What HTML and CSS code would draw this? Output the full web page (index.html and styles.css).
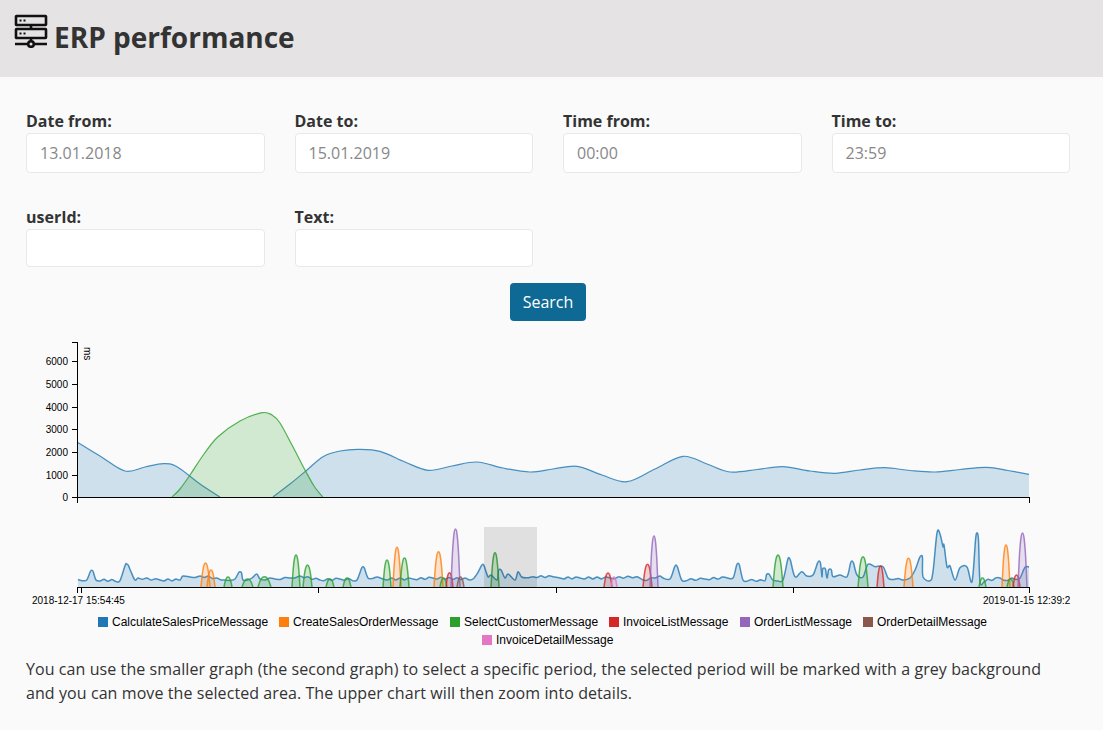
FILE: index.html
```html
<!DOCTYPE html>
<html lang="en">
<head>
    <title>ERP performance</title>
    <link rel="stylesheet" href="styles.css">
</head>
<body>
    <header class="banner">
        <svg class="logo" viewBox="0 0 34 34" width="34" height="34" aria-hidden="true">
            <rect x="2" y="2" width="30" height="9" rx="0.5" />
            <rect x="2" y="15" width="30" height="9" rx="0.5" />
            <path d="M17 11v4M17 24v3M1 30h12M21 30h12" />
            <circle cx="17" cy="30" r="2.8" />
            <path class="logo-dots" d="M5.500 6.500h2M9.500 6.500h2M5.500 19.500h2M9.500 19.500h2" />
        </svg>
        <h1>ERP performance</h1>
    </header>

    <main class="content">
        <form class="filters">
            <div class="field">
                <label for="date-from">Date from:</label>
                <input id="date-from" type="text" class="tall" value="13.01.2018">
            </div>
            <div class="field">
                <label for="date-to">Date to:</label>
                <input id="date-to" type="text" class="tall" value="15.01.2019">
            </div>
            <div class="field">
                <label for="time-from">Time from:</label>
                <input id="time-from" type="text" class="tall" value="00:00">
            </div>
            <div class="field">
                <label for="time-to">Time to:</label>
                <input id="time-to" type="text" class="tall" value="23:59">
            </div>
            <div class="field">
                <label for="user-id">userId:</label>
                <input id="user-id" type="text">
            </div>
            <div class="field">
                <label for="search-text">Text:</label>
                <input id="search-text" type="text">
            </div>
        </form>
        <div class="actions">
            <button type="button" id="search-button">Search</button>
        </div>

        <svg class="chart" viewBox="26 335 1050 315" width="1050" height="315">
            <g id="main-areas"></g>
            <g id="mini-areas"></g>
            <rect class="brush" x="484" y="527" width="53" height="60" />

            <path class="axis" d="M72 342.500h5v154.500M71.500 497h958v6M77 497v6" />
            <path class="axis" d="M72 475h5M72 452h5M72 429.500h5M72 407h5M72 384.500h5M72 361.500h5" />
            <g class="y-labels">
                <text x="68" y="365">6000</text>
                <text x="68" y="388">5000</text>
                <text x="68" y="411">4000</text>
                <text x="68" y="433">3000</text>
                <text x="68" y="456">2000</text>
                <text x="68" y="479">1000</text>
                <text x="68" y="501">0</text>
            </g>
            <text class="tick-label" transform="translate(84 347) rotate(90)">ms</text>

            <path class="axis" d="M77 593v-6h952v6M81 587v6M318.500 587v6M556.500 587v6M793.500 587v6" />
            <text class="tick-label" x="32" y="604">2018-12-17 15:54:45</text>
            <text class="tick-label" x="983" y="604">2019-01-15 12:39:2</text>

            <g class="legend">
                <rect x="98" y="617" width="10" height="10" fill="#1f77b4" />
                <text x="112" y="626">CalculateSalesPriceMessage</text>
                <rect x="279" y="617" width="10" height="10" fill="#ff7f0e" />
                <text x="293" y="626">CreateSalesOrderMessage</text>
                <rect x="450" y="617" width="10" height="10" fill="#2ca02c" />
                <text x="464" y="626">SelectCustomerMessage</text>
                <rect x="609" y="617" width="10" height="10" fill="#d62728" />
                <text x="623" y="626">InvoiceListMessage</text>
                <rect x="740" y="617" width="10" height="10" fill="#9467bd" />
                <text x="754" y="626">OrderListMessage</text>
                <rect x="863" y="617" width="10" height="10" fill="#8c564b" />
                <text x="877" y="626">OrderDetailMessage</text>
                <rect x="482" y="635" width="10" height="10" fill="#e377c2" />
                <text x="496" y="644">InvoiceDetailMessage</text>
            </g>
        </svg>

        <p class="hint">You can use the smaller graph (the second graph) to select a specific period, the selected period will be marked with a grey background and you can move the selected area. The upper chart will then zoom into details.</p>
    </main>

    <script src="chart.js"></script>
</body>
</html>
```

FILE: styles.css
```css
body {
    margin: 0;
    background-color: #fafafa;
    color: #333;
    font-family: "Open Sans", Arial, sans-serif;
    font-size: 16px;
}

.banner {
    display: flex;
    align-items: flex-start;
    gap: 6px;
    height: 77px;
    padding: 14px 0 0 14px;
    box-sizing: border-box;
    background-color: #e5e3e4;
}

.banner h1 {
    margin: 3px 0 0 0;
    font-size: 28px;
    font-weight: 700;
    line-height: 41px;
}

.logo {
    display: block;
    fill: none;
    stroke: #111;
    stroke-width: 2.6;
}

.logo circle {
    fill: #e5e3e4;
}

.logo-dots {
    stroke-width: 2;
}

.content {
    padding: 32px 33px 0 26px;
}

.filters {
    display: grid;
    grid-template-columns: repeat(4, 1fr);
    column-gap: 30px;
    row-gap: 32px;
}

.field label {
    display: block;
    font-weight: 700;
    line-height: 24px;
}

.field input {
    display: block;
    width: 100%;
    height: 38px;
    padding: 0 13px;
    box-sizing: border-box;
    background-color: #fff;
    border: 1px solid #e8e8e8;
    border-radius: 4px;
    color: #888;
    font-family: inherit;
    font-size: 16px;
}

.field input.tall {
    height: 40px;
}

.actions {
    display: flex;
    justify-content: center;
    margin-top: 16px;
}

#search-button {
    width: 76px;
    height: 38px;
    padding: 0;
    background-color: #0e6a94;
    border: none;
    border-radius: 4px;
    color: white;
    font-family: inherit;
    font-size: 16px;
    font-weight: 500;
}

.chart {
    display: block;
    margin-top: 14px;
    font-family: "Liberation Sans", Arial, sans-serif;
}

.axis {
    fill: none;
    stroke: #000;
    stroke-width: 1;
    shape-rendering: crispEdges;
}

.y-labels text {
    font-size: 10px;
    text-anchor: end;
}

.tick-label {
    font-size: 10px;
}

.legend text {
    font-size: 12px;
}

.brush {
    fill: #000;
    fill-opacity: 0.1;
}

.area {
    fill-opacity: 0.2;
    stroke: none;
}

.line {
    fill: none;
    stroke-width: 1.5;
    stroke-opacity: 0.8;
}

#main-areas .line {
    stroke-width: 1.2;
}

.hint {
    margin: 7px 0 0 0;
    line-height: 24px;
    letter-spacing: 0.08px;
}
```

FILE: chart.js
```js
var BLUE = '#1f77b4', ORANGE = '#ff7f0e', GREEN = '#2ca02c', RED = '#d62728';
var PURPLE = '#9467bd', BROWN = '#8c564b', PINK = '#e377c2';
var NS = 'http://www.w3.org/2000/svg';

// upper chart, points read as x, y on the page
var mainBlue = [[77,442],[100,456],[125,471],[145,467],[163,463.7],[177,466.7],[200,484],[220,497]];
var mainBlue2 = [[273,497],[290,484],[307,470],[323,456.7],[340,451],[358,449.3],[380,451.3],[405,462],[428,470.3],
    [452,466],[477,462],[503,468],[530,472],[553,469],[577,466.3],[602,475],[627,481.7],[655,469],[683,456.3],
    [707,464],[730,472],[757,469.5],[783,466.7],[810,471],[835,473.3],[860,470],[885,467.7],[910,470.5],[935,472],
    [960,469.5],[987,467.3],[1008,470.5],[1029,474.3]];
var mainGreen = [[172,497],[180,489],[190,475],[204,454],[218,436.7],[240,421],[262,412.7],[272,415],[280,423],
    [292,445],[305,470],[314,486],[322.7,497]];

// lower chart
var miniBlue = [[78,579.5],[86.7,580],[91.7,570.3],[96,580],[120,580.7],[126.7,564],[131,571.7],[135,580],[138,578],
    [160,580],[180,580],[183,576],[190,577],[200,576],[216.7,578],[225,580],[235,579],[240,571.7],[243,580],
    [252,578],[256.7,574],[260,579],[275,579],[290,578],[300,576],[320,580],[340,579],[357,580],[363,566.7],
    [368,578],[377,577],[383,579],[413,579],[433,578],[473,579],[482.7,564.3],[488,576.7],[491,575],[497,580],
    [500,569.3],[505,578],[508,574],[515,580],[518,571.7],[521.7,577],[533,576.7],[553,576.7],[560,578],[580,578],
    [610,578],[637,576.7],[643,580],[655,578],[660,576],[663,578],[670,579],[676,565],[681.7,580],[705,579],
    [726.7,577.7],[733,578],[738,563.3],[743,580],[765,580.7],[768,573.7],[772.7,580],[783,580],[789,557.7],
    [795,576.7],[801.7,571.7],[806.7,576],[813,575],[819,561],[822,576.7],[824,568],[827,578],[830,569],[833,576.7],
    [840,575],[847,576.7],[852,561],[857,575],[863,577],[868,564.3],[875,566.7],[883,566.7],[888,578],[903,580],
    [910,578],[915,570],[921,555.7],[923,576.7],[930,580.7],[933,571.7],[937,533],[940,534],[943,546.7],[944,545],
    [947,566.7],[950,566],[955,580],[960,567.7],[967,567],[972,581.7],[977,533],[980,581.7],[1000,578],[1003,580],
    [1020,578],[1025,567.3],[1029,567]];

// start x, end x, peak y, colour
var bumps = [
    [201,210,563,ORANGE],[207,215,570,ORANGE],[393,401,547.3,ORANGE],[434,443,551.7,ORANGE],[904,913,558.3,ORANGE],[1002,1010,545,ORANGE],
    [224,232,577,GREEN],[242,253,579,GREEN],[258,271,576.7,GREEN],[292,300,555,GREEN],[303,312,565,GREEN],[326,334,579,GREEN],
    [343,351,578,GREEN],[383,391,560,GREEN],[400,409,558,GREEN],[440,447,578,GREEN],[491,499,552.7,GREEN],[773,783,555,GREEN],
    [858,868,556.7,GREEN],[979,986,578,GREEN],[1007,1014,579,GREEN],
    [446,453,572.7,RED],[604,612,573,RED],[643,652,564.3,RED],[877,884,566,RED],[1013,1020,575,RED],
    [451,460,529,PURPLE],[650,658,536,PURPLE],[1018,1027,533,PURPLE],
    [457,464,577,BROWN],[611,617,577,PINK]
];

// catmull-rom through the points
function smooth(points) {
    var d = 'M' + points[0][0] + ' ' + points[0][1];
    for (var i = 0; i < points.length - 1; i++) {
        var p0 = points[i - 1] || points[i];
        var p1 = points[i];
        var p2 = points[i + 1];
        var p3 = points[i + 2] || p2;
        var c1x = p1[0] + (p2[0] - p0[0]) / 6;
        var c1y = p1[1] + (p2[1] - p0[1]) / 6;
        var c2x = p2[0] - (p3[0] - p1[0]) / 6;
        var c2y = p2[1] - (p3[1] - p1[1]) / 6;
        d += 'C' + c1x.toFixed(1) + ' ' + c1y.toFixed(1) + ' ' + c2x.toFixed(1) + ' ' + c2y.toFixed(1) + ' ' + p2[0] + ' ' + p2[1];
    }
    return d;
}

// wider peaks and a little jitter on the long flat parts
function roughen(points) {
    var out = [];
    for (var i = 0; i < points.length; i++) {
        var p = points[i];
        var prev = points[i - 1];
        var next = points[i + 1];
        if (prev && next && p[1] < prev[1] - 6 && p[1] < next[1] - 6) {
            var h = Math.min(prev[1], next[1]) - p[1];
            out.push([p[0] - 1.5, p[1] + h * 0.15], p, [p[0] + 1.5, p[1] + h * 0.15]);
        } else {
            out.push(p);
        }
        if (next && next[0] - p[0] > 8) {
            var steps = Math.floor((next[0] - p[0]) / 4);
            for (var s = 1; s < steps; s++) {
                var t = s / steps;
                var y = p[1] + (next[1] - p[1]) * t + (s % 2 ? 0.9 : -0.9);
                out.push([p[0] + (next[0] - p[0]) * t, y]);
            }
        }
    }
    return out;
}

function addSeries(group, points, color, base) {
    var line = smooth(points);
    var first = points[0];
    var last = points[points.length - 1];
    var area = document.createElementNS(NS, 'path');
    area.setAttribute('class', 'area');
    area.setAttribute('fill', color);
    area.setAttribute('d', line + 'L' + last[0] + ' ' + base + 'L' + first[0] + ' ' + base + 'Z');
    group.appendChild(area);
    var stroke = document.createElementNS(NS, 'path');
    stroke.setAttribute('class', 'line');
    stroke.setAttribute('stroke', color);
    stroke.setAttribute('d', line);
    group.appendChild(stroke);
}

function bumpPoints(x0, x1, peak, base) {
    var w = x1 - x0;
    var h = base - peak;
    return [[x0, base], [x0 + w * 0.15, base - h * 0.55], [x0 + w * 0.32, base - h * 0.9], [x0 + w / 2, peak],
        [x0 + w * 0.68, base - h * 0.9], [x0 + w * 0.85, base - h * 0.55], [x1, base]];
}

var mainGroup = document.getElementById('main-areas');
addSeries(mainGroup, mainBlue, BLUE, 497);
addSeries(mainGroup, mainBlue2, BLUE, 497);
addSeries(mainGroup, mainGreen, GREEN, 497);

var miniGroup = document.getElementById('mini-areas');
addSeries(miniGroup, roughen(miniBlue), BLUE, 587);
bumps.forEach(function(b) {
    addSeries(miniGroup, bumpPoints(b[0], b[1], b[2], 587), b[3], 587);
});
```
